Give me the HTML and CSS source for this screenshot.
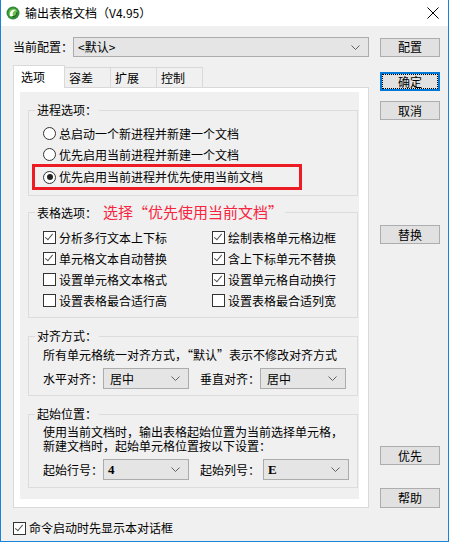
FILE: index.html
```html
<!DOCTYPE html>
<html lang="zh-CN">
<head>
    <meta charset="UTF-8">
    <title>输出表格文档</title>
    <link rel="stylesheet" href="styles.css">
</head>
<body>
<div class="window">
    <!-- Заголовок окна -->
    <div class="titlebar">
        <svg class="app-icon" width="14" height="14" viewBox="0 0 14 14">
            <circle cx="7" cy="7" r="6.5" fill="#2e8b3a"/>
            <circle cx="7" cy="7" r="4.5" fill="#6cc04a"/>
            <path d="M4 10 C3 6 6 3 10 4 C7 5 6 7 7 10 Z" fill="#fff"/>
            <path d="M6 11 C9 11 11 9 11 6" stroke="#1d5e24" stroke-width="1.2" fill="none"/>
        </svg>
        <span class="title">输出表格文档（V4.95）</span>
        <svg class="close" width="12" height="12" viewBox="0 0 12 12">
            <path d="M0.5 0.5 L11.5 11.5 M11.5 0.5 L0.5 11.5" stroke="#000" stroke-width="1"/>
        </svg>
    </div>

    <div class="client">
        <div class="config-row">
            <span class="row-label">当前配置：</span>
            <div class="combo combo-config">
                <span>&lt;默认&gt;</span>
                <svg class="chevron" width="9" height="5" viewBox="0 0 9 5"><path d="M0.5 0.5 L4.5 4.5 L8.5 0.5" stroke="#606060" fill="none"/></svg>
            </div>
            <button class="btn btn-config">配置</button>
        </div>

        <div class="main">
            <div class="tabs">
                <div class="tab-strip">
                    <div class="tab active">选项</div>
                    <div class="tab">容差</div>
                    <div class="tab">扩展</div>
                    <div class="tab">控制</div>
                </div>
                <div class="tab-page">
                    <div class="page-inner">
                        <!-- Параметры процесса -->
                        <fieldset class="group group-process">
                            <legend>进程选项：</legend>
                            <div class="radio-row first"><span class="radio"></span>总启动一个新进程并新建一个文档</div>
                            <div class="radio-row second"><span class="radio"></span>优先启用当前进程并新建一个文档</div>
                            <div class="highlight">
                                <div class="radio-row"><span class="radio checked"></span>优先启用当前进程并优先使用当前文档</div>
                            </div>
                        </fieldset>

                        <!-- Параметры таблицы -->
                        <fieldset class="group group-table">
                            <legend>表格选项：<span class="note">选择“优先使用当前文档”</span></legend>
                            <div class="check-grid">
                                <div class="check"><span class="box checked"></span>分析多行文本上下标</div>
                                <div class="check"><span class="box checked"></span>绘制表格单元格边框</div>
                                <div class="check"><span class="box checked"></span>单元格文本自动替换</div>
                                <div class="check"><span class="box checked"></span>含上下标单元不替换</div>
                                <div class="check"><span class="box"></span>设置单元格文本格式</div>
                                <div class="check"><span class="box checked"></span>设置单元格自动换行</div>
                                <div class="check"><span class="box"></span>设置表格最合适行高</div>
                                <div class="check"><span class="box"></span>设置表格最合适列宽</div>
                            </div>
                        </fieldset>

                        <!-- Выравнивание -->
                        <fieldset class="group group-align">
                            <legend>对齐方式：</legend>
                            <div class="text-line">所有单元格统一对齐方式，“默认”表示不修改对齐方式</div>
                            <div class="field-row">
                                <span class="row-label">水平对齐：</span>
                                <div class="combo combo-small">
                                    <span>居中</span>
                                    <svg class="chevron" width="9" height="5" viewBox="0 0 9 5"><path d="M0.5 0.5 L4.5 4.5 L8.5 0.5" stroke="#606060" fill="none"/></svg>
                                </div>
                                <span class="row-label second-label">垂直对齐：</span>
                                <div class="combo combo-small">
                                    <span>居中</span>
                                    <svg class="chevron" width="9" height="5" viewBox="0 0 9 5"><path d="M0.5 0.5 L4.5 4.5 L8.5 0.5" stroke="#606060" fill="none"/></svg>
                                </div>
                            </div>
                        </fieldset>

                        <!-- Начальная позиция -->
                        <fieldset class="group group-start">
                            <legend>起始位置：</legend>
                            <div class="dense-text">使用当前文档时，输出表格起始位置为当前选择单元格，<br>新建文档时，起始单元格位置按以下设置：</div>
                            <div class="field-row">
                                <span class="row-label">起始行号：</span>
                                <div class="combo combo-small">
                                    <span class="mono">4</span>
                                    <svg class="chevron" width="9" height="5" viewBox="0 0 9 5"><path d="M0.5 0.5 L4.5 4.5 L8.5 0.5" stroke="#606060" fill="none"/></svg>
                                </div>
                                <span class="row-label second-label wide">起始列号：</span>
                                <div class="combo combo-small">
                                    <span class="mono">E</span>
                                    <svg class="chevron" width="9" height="5" viewBox="0 0 9 5"><path d="M0.5 0.5 L4.5 4.5 L8.5 0.5" stroke="#606060" fill="none"/></svg>
                                </div>
                            </div>
                        </fieldset>
                    </div>
                </div>
            </div>

            <div class="side">
                <button class="btn btn-ok">确定</button>
                <button class="btn btn-cancel">取消</button>
                <button class="btn btn-replace">替换</button>
                <button class="btn btn-priority">优先</button>
                <button class="btn btn-help">帮助</button>
            </div>
        </div>

        <div class="check startup"><span class="box checked"></span>命令启动时先显示本对话框</div>
    </div>
</div>
</body>
</html>
```

FILE: styles.css
```css
body {
    margin: 0;
    background-color: #ffffff;
    font-family: "Noto Sans CJK SC", "Noto Sans", sans-serif;
    font-size: 12px;
    line-height: 16px;
    color: #000;
}

/* Окно */
.window {
    width: 449px;
    height: 542px;
    box-sizing: border-box;
    border: 1px solid #1883d7;
    border-top: none;
    background-color: #f0f0f0;
    display: flex;
    flex-direction: column;
}

.titlebar {
    height: 26px;
    background-color: #ffffff;
    display: flex;
    align-items: center;
    padding-left: 5px;
    flex-shrink: 0;
}

.app-icon {
    margin-right: 5px;
}

.title {
    font-size: 12px;
}

.close {
    margin-left: auto;
    margin-right: 9px;
}

.client {
    flex: 1;
    padding: 11px 0 0 12px;
}

/* Строка конфигурации */
.config-row {
    display: flex;
    align-items: center;
    height: 20px;
}

.row-label {
    width: 60px;
    flex-shrink: 0;
    white-space: nowrap;
}

.combo {
    display: flex;
    align-items: center;
    height: 21px;
    box-sizing: border-box;
    border: 1px solid #acacac;
    background-color: #e5e5e5;
    padding: 0 8px 0 4px;
}

.combo .chevron {
    margin-left: auto;
}

.combo-config {
    width: 296px;
    height: 20px;
}

.combo-small {
    width: 86px;
    padding-left: 6px;
}

.mono {
    font-family: "Liberation Serif", serif;
    font-weight: bold;
    font-size: 13px;
    margin-left: -2px;
}

.btn {
    font-family: inherit;
    font-size: 12px;
    width: 60px;
    height: 19px;
    padding: 0;
    box-sizing: border-box;
    background-color: #e1e1e1;
    border: 1px solid #adadad;
    color: #000;
    line-height: 16px;
}

.btn-config {
    margin-left: 11px;
}

/* Основная часть */
.main {
    display: flex;
    margin-top: 8px;
}

.tabs {
    width: 356px;
}

.tab-strip {
    display: flex;
    align-items: flex-end;
    height: 22px;
}

.tab {
    width: 46px;
    height: 20px;
    box-sizing: border-box;
    border: 1px solid #d9d9d9;
    border-left: none;
    border-bottom: none;
    background-color: #f0f0f0;
    padding-left: 4px;
    line-height: 20px;
}

.tab.active {
    position: relative;
    z-index: 1;
    width: 52px;
    height: 23px;
    margin-bottom: -1px;
    border-left: 1px solid #d9d9d9;
    background-color: #ffffff;
    padding-left: 7px;
    line-height: 21px;
}

.tab-page {
    height: 421px;
    box-sizing: border-box;
    border: 1px solid #d9d9d9;
    background-color: #ffffff;
    padding: 4px 9px 8px 6px;
}

.page-inner {
    height: 407px;
    background-color: #f0f0f0;
    padding: 10px 0 0 8px;
    box-sizing: border-box;
}

/* Группы */
.group {
    width: 330px;
    box-sizing: border-box;
    margin: 0;
    border: 1px solid #dcdcdc;
    padding: 0 0 6px 14px;
}

.group legend {
    margin-left: -8px;
    padding: 0 2px;
    line-height: 16px;
    white-space: nowrap;
}

.group-process {
    padding-top: 4px;
    padding-bottom: 5px;
}

.group-table {
    margin-top: 8px;
    padding-top: 6px;
}

.group-align {
    margin-top: 10px;
    padding-top: 1px;
}

.group-start {
    margin-top: 10px;
    padding-top: 3px;
    padding-bottom: 7px;
}

.note {
    color: #f7243f;
    font-size: 15px;
    margin-left: 6px;
}

.radio-row {
    display: flex;
    align-items: center;
    gap: 3px;
    white-space: nowrap;
}

.radio-row.first {
    height: 23px;
}

.radio-row.second {
    height: 19px;
}

.highlight {
    width: 270px;
    height: 26px;
    box-sizing: border-box;
    border: 3px solid #ed1c24;
    margin-left: -11px;
    padding-left: 8px;
}

.highlight .radio-row {
    height: 20px;
}

.radio {
    width: 13px;
    height: 13px;
    box-sizing: border-box;
    border: 1px solid #333;
    border-radius: 50%;
    background-color: #fff;
    display: flex;
    align-items: center;
    justify-content: center;
    flex-shrink: 0;
}

.radio.checked::after {
    content: "";
    width: 6px;
    height: 6px;
    border-radius: 50%;
    background-color: #222;
}

.check-grid {
    display: grid;
    grid-template-columns: 169px 1fr;
    grid-auto-rows: 21px;
}

.check {
    display: flex;
    align-items: center;
    gap: 3px;
    white-space: nowrap;
}

.box {
    width: 13px;
    height: 13px;
    box-sizing: border-box;
    border: 1px solid #333;
    background-color: #fff;
    flex-shrink: 0;
    position: relative;
}

.box.checked::after {
    content: "";
    position: absolute;
    left: 3px;
    top: 0px;
    width: 3px;
    height: 7px;
    border-right: 1.3px solid #555;
    border-bottom: 1.3px solid #555;
    transform: rotate(40deg);
}

.text-line {
    height: 20px;
    line-height: 20px;
    white-space: nowrap;
}

.dense-text {
    line-height: 14px;
    white-space: nowrap;
}

.field-row {
    display: flex;
    align-items: center;
    margin-top: 3px;
    height: 21px;
}

.group-start .field-row {
    margin-top: 6px;
}

.second-label {
    margin-left: 11px;
}

.second-label.wide {
    width: 63px;
}

/* Кнопки справа */
.side {
    display: flex;
    flex-direction: column;
    margin-left: 11px;
}

.btn-ok {
    margin-top: 7px;
    border: 2px solid #0078d7;
    outline: 1px dotted #000;
    outline-offset: -3px;
}

.btn-cancel {
    margin-top: 10px;
}

.btn-replace {
    margin-top: 105px;
}

.btn-priority {
    margin-top: 202px;
}

.btn-help {
    margin-top: 23px;
    height: 20px;
}

.startup {
    margin-top: 10px;
    height: 20px;
}
```
